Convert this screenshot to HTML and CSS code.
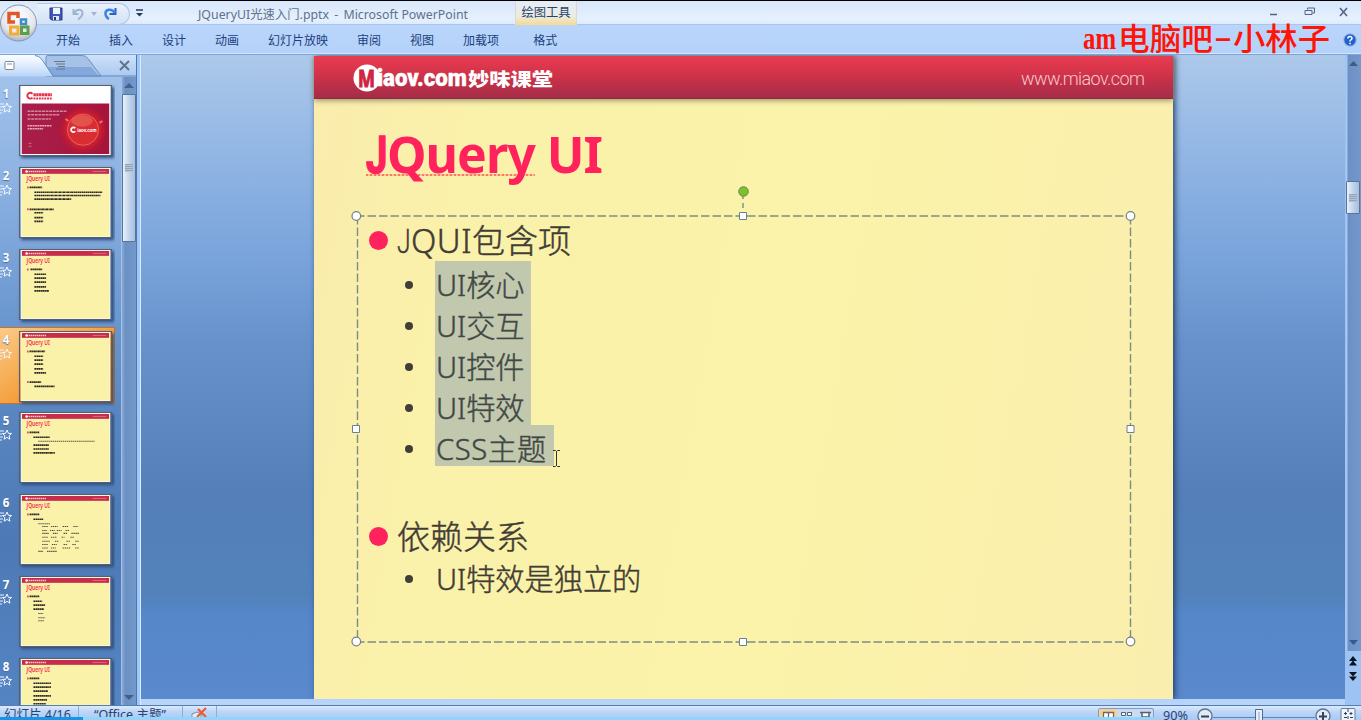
FILE: index.html
```html
<!DOCTYPE html>
<html lang="zh-CN">
<head>
<meta charset="utf-8">
<title>JQueryUI光速入门.pptx - Microsoft PowerPoint</title>
<link rel="stylesheet" href="styles.css">
</head>
<body>
<svg class="defs" width="0" height="0">
  <defs>
    <linearGradient id="cover" x1="0" y1="0" x2="1" y2="0"><stop offset="0" stop-color="#a91f4b"/><stop offset="1" stop-color="#a5143a"/></linearGradient>
    <radialGradient id="globe"><stop offset="0" stop-color="#ff8a70"/><stop offset=".45" stop-color="#e53a3c"/><stop offset=".8" stop-color="#c6182f"/><stop offset="1" stop-color="#b0163a" stop-opacity="0"/></radialGradient>
    <radialGradient id="orb" cx=".5" cy=".3" r=".7"><stop offset="0" stop-color="#fff"/><stop offset=".7" stop-color="#e3e5ea"/><stop offset="1" stop-color="#aab2c2"/></radialGradient>
    <symbol id="base" viewBox="0 0 92 71">
      <rect width="92" height="71" fill="#fbf2aa"/>
      <rect x="1" y="1" width="90" height="5" fill="#c62c4b"/>
      <circle cx="6" cy="3.5" r="1.3" fill="#fff"/>
      <path d="M8 3.6h18" stroke="#f6c5c9" stroke-width="1.3" stroke-dasharray="1.6 .5"/>
      <path d="M74 3.5h14" stroke="#dc8091" stroke-width=".8"/>
      <text x="6" y="13.500" class="mini-title" textLength="24" lengthAdjust="spacingAndGlyphs">JQuery UI</text>
      <path d="M6.500 20h1.500" stroke="#ef3350" stroke-width="2"/>
      <rect x=".5" y=".5" width="91" height="70" fill="none" stroke="#f8f5e4"/>
    </symbol>
    <symbol id="star" viewBox="0 0 12 12"><path d="M0 2h4M0 5h2M0 8h3M0 11h2" stroke="#e9f2ff"/><path d="M7 1l1.400 3.300 3.200.2-2.500 2.200.8 3.500L7 8.400 4.100 10.200l.8-3.500L2.400 4.500l3.200-.2z" fill="none" stroke="#f5f9ff"/></symbol>
  </defs>
</svg>
<div class="app">
  <header class="titlebar">
    <div class="qat">
      <svg width="14" height="14" viewBox="0 0 14 14"><path d="M1 1h12v12H2.500L1 11.500z" fill="#4457b4" stroke="#25368d"/><path d="M4 1h7v6H4z" fill="#eef5ff"/><path d="M4 9h6v4H4z" fill="#dfe7f8"/><path d="M5 10h2v3H5z" fill="#26367f"/></svg>
      <svg class="undo" width="12" height="14" viewBox="0 0 12 14"><path d="M1.500 2v5h5" fill="none" stroke="#9db3d2" stroke-width="2"/><path d="M2 6.500C5 1 11 2 10.500 6.500 10.300 9.500 8 11 6 12.500" fill="none" stroke="#9db3d2" stroke-width="2"/></svg>
      <svg class="drop" width="6" height="4"><path d="M0 0h6L3 4z" fill="#a5b5cf"/></svg>
      <svg class="redo" width="13" height="14" viewBox="0 0 13 14"><path d="M11.500 1v6h-6" fill="none" stroke="#2c61c4" stroke-width="2"/><path d="M11 6C8 1 1 2 1.500 7c.2 2.500 1.500 4 3.500 5" fill="none" stroke="#3f83e0" stroke-width="2.500"/></svg>
    </div>
    <svg class="more" width="7" height="8"><path d="M0 1h7" stroke="#26395e" stroke-width="1.500"/><path d="M0 4h7L3.500 7.500z" fill="#26395e"/></svg>
    <span class="doc">JQueryUI光速入门.pptx<i> - </i>Microsoft PowerPoint</span>
    <span class="context">绘图工具</span>
    <svg class="winctl" width="80" height="14" viewBox="0 0 80 14"><path d="M1 9.500h7" stroke="#526583" stroke-width="1.500"/><path d="M38.500 4.500V3h7v5h-2M36 5.500h7v4h-7z" fill="none" stroke="#526583"/><path d="M71 3l7 8M78 3l-7 8" stroke="#526583" stroke-width="1.600"/></svg>
  </header>
  <nav class="ribbon">
    <span>开始</span><span>插入</span><span>设计</span><span>动画</span><span>幻灯片放映</span><span>审阅</span><span>视图</span><span>加载项</span><span class="format">格式</span>
    <svg class="help" width="14" height="14" viewBox="0 0 14 14"><circle cx="7" cy="7" r="6.200" fill="#2361d0" stroke="#9db8dc"/><path d="M4.800 5.500C5 2.800 9.300 3 9 5.400 8.800 6.800 7 6.800 7 8.500M7 9.700v1.500" fill="none" stroke="#fff" stroke-width="1.500"/></svg>
  </nav>
  <main class="work">
    <aside class="panel">
      <svg class="tabs" width="136" height="22" viewBox="0 0 136 22">
        <defs><linearGradient id="tabg" x1="0" y1="0" x2="0" y2="1"><stop offset="0" stop-color="#fdfeff"/><stop offset=".55" stop-color="#dbeaff"/><stop offset="1" stop-color="#b9d5f9"/></linearGradient>
        <linearGradient id="tabh" x1="0" y1="0" x2="0" y2="1"><stop offset="0" stop-color="#cfe1f8"/><stop offset="1" stop-color="#a9c8f0"/></linearGradient></defs>
        <path d="M0 0h136v22H0z" fill="url(#tabh)"/>
        <path d="M46 21V2q0-1.500 2-1.500h34q4 0 6 3L101 21z" fill="#a6c2e6" stroke="#6e93c4"/>
        <path d="M47 12h44l8 9H47z" fill="#83a9dc"/>
        <path d="M0 0h35q4 0 7 4l11 17H0z" fill="url(#tabg)"/>
        <path d="M35 .5q4 0 7 4L53 21h83" fill="none" stroke="#5f86b8"/>
        <rect x="5" y="6.500" width="9" height="8" rx="1" fill="#fff" stroke="#7e8792"/><path d="M7 9h5" stroke="#8a8f98"/>
        <path d="M54 6.500h11M56 9h9M58 11.500h7M56 14h9" stroke="#6d7785"/>
        <path d="M120 6l9 9M129 6l-9 9" stroke="#5d7390" stroke-width="1.900"/>
      </svg>
      <div class="panel-body">
        <ol class="thumbs">
          <li><div class="num">1<svg><use href="#star"/></svg></div>
            <svg class="thumb" viewBox="0 0 92 71"><rect width="92" height="71" fill="#fff"/><path d="M1 18h90v52H1z" fill="url(#cover)"/><circle cx="64" cy="45" r="26" fill="url(#globe)" opacity=".7"/><circle cx="64" cy="45" r="16" fill="#d92d34"/><ellipse cx="63" cy="36" rx="11" ry="6" fill="#f58a70" opacity=".4"/><circle cx="64" cy="45" r="16" fill="none" stroke="#f4614e"/><path d="M46 34l3 2M84 36l-3 2" stroke="#ff7057" stroke-width="2"/>
              <path d="M12 8a3 3 0 1 0 0 4" fill="none" stroke="#e7304b" stroke-width="2"/><path d="M13 9h19" stroke="#e7304b" stroke-width="3" stroke-dasharray="2.500 .4"/><path d="M13 12.800h19" stroke="#e7304b" stroke-width="2" stroke-dasharray="2 .8"/>
              <path d="M7 26h40M7 29.500h33M7 34h24" stroke="#d386a0" stroke-width="1.500" stroke-dasharray="3 .7"/><path d="M7 41h25M7 44h16" stroke="#e0aebf" stroke-width="1.500" stroke-dasharray="2 .5"/><path d="M8 59h3M8 62h3" stroke="#cc6e8a"/>
              <path d="M56 43.500a2.400 2.400 0 1 0 0 3" fill="none" stroke="#fff" stroke-width="1.800"/><text x="58" y="47.500" class="mini-logo" textLength="20" lengthAdjust="spacingAndGlyphs">iaov.com</text></svg></li>
          <li><div class="num">2<svg><use href="#star"/></svg></div>
            <svg class="thumb" viewBox="0 0 92 71"><use href="#base"/><g class="ink"><path d="M9 20h13M14 25h70M14 28.300h68M14 32h38M9 42.500h25M14 46h9M14 51h9M14 55h9"/></g><path d="M6.500 42.500h1.500" stroke="#ef3350" stroke-width="2"/></svg></li>
          <li><div class="num">3<svg><use href="#star"/></svg></div>
            <svg class="thumb" viewBox="0 0 92 71"><use href="#base"/><g class="ink"><path d="M10 20h12M14 25h12M14 29h12M14 33h12M14 38h12M14 42h15"/></g></svg></li>
          <li class="current"><div class="num">4<svg><use href="#star"/></svg></div>
            <svg class="thumb" viewBox="0 0 92 71"><use href="#base"/><g class="ink"><path d="M9 20h16M14 25h9M14 29h9M14 33h9M14 38h9M14 42h12M9 51.500h12M14 56h21"/></g><path d="M6.500 51.500h1.500" stroke="#ef3350" stroke-width="2"/></svg></li>
          <li><div class="num">5<svg><use href="#star"/></svg></div>
            <svg class="thumb" viewBox="0 0 92 71"><use href="#base"/><g class="ink"><path d="M9 20h10M13 25h17M13 33h16M13 37h16M13 41h22"/></g><path d="M18 29h58" class="faint"/></svg></li>
          <li><div class="num">6<svg><use href="#star"/></svg></div>
            <svg class="thumb" viewBox="0 0 92 71"><use href="#base"/><g class="ink"><path d="M9 20h10M13 25h10"/></g><path d="M18 29.500h12M22 32.500h6M31 32.500h7M43 32.500h6M54 32.500h5M22 36.500h5M30 36.500h5M37 36.500h5M46 36.500h4M22 39.500h7M33 39.500h5M44 39.500h4M52 39.500h8M22 43.500h6M31 43.500h6M42 43.500h3M51 43.500h4M22 47.500h8M35 47.500h4M47 47.500h4M56 47.500h4M22 51h6M32 51h5M44 51h4M53 51h4M22 54.500h6M31 54.500h5M43 54.500h8M56 54.500h4M18 58h5M27 58h10" class="faint"/></svg></li>
          <li><div class="num">7<svg><use href="#star"/></svg></div>
            <svg class="thumb" viewBox="0 0 92 71"><use href="#base"/><g class="ink"><path d="M9 20h10M13 25h9M13 29h12M13 33h11"/></g><path d="M18 37.500h5M18 42h7M18 45h6" class="faint"/></svg></li>
          <li><div class="num">8<svg><use href="#star"/></svg></div>
            <svg class="thumb" viewBox="0 0 92 71"><use href="#base"/><g class="ink"><path d="M9 20h10M13 25h18M13 29h18M13 33h15M13 38h18M13 42h14M13 46h13"/></g></svg></li>
        </ol>
        <div class="vbar"><svg width="11" height="5"><path d="M0 5h10L5 0z" fill="#456389"/></svg><div class="knob"><b></b></div><svg class="end" width="11" height="5"><path d="M0 0h10L5 5z" fill="#3d5f91"/></svg></div>
      </div>
    </aside>
    <div class="split"></div>
    <section class="canvas">
      <article class="slide">
        <div class="brand">
          <svg width="859" height="42" viewBox="0 0 859 42">
            <circle cx="53" cy="22" r="13.500" fill="#fff"/>
            <text x="44" y="30.500" class="logo-m" textLength="17" lengthAdjust="spacingAndGlyphs">M</text>
            <text x="63" y="30" class="logo" textLength="90" lengthAdjust="spacingAndGlyphs">iaov.com</text>
            <text x="154" y="30" class="logo-cn" textLength="85" lengthAdjust="spacingAndGlyphs">妙味课堂</text>
            <text x="707" y="28.500" class="url" textLength="124" lengthAdjust="spacing">www.miaov.com</text>
          </svg>
        </div>
        <h1><span class="typo"><span class="jay">J</span>Query</span> UI</h1>
        <div class="holder">
          <svg class="frame" width="790" height="466" viewBox="0 0 790 466">
            <path d="M8 31H782.500M8 457H782.500M9.500 31V457M782.500 31V457" fill="none" stroke="#7d8d84" stroke-width="1.400" stroke-dasharray="8.500 3"/>
            <path d="M395 9v22" stroke="#7d8d84" stroke-width="1.400" stroke-dasharray="5 4"/>
            <circle cx="395.500" cy="6.500" r="4.800" fill="#7cc02c" stroke="#6a8a55"/>
            <g fill="#fff" stroke="#77808c" stroke-width="1.200"><circle cx="8.300" cy="31" r="4.300"/><circle cx="782.500" cy="31" r="4.300"/><circle cx="8.300" cy="456.500" r="4.300"/><circle cx="782.500" cy="456.500" r="4.300"/></g>
            <g fill="#fff" stroke="#668098"><path d="M391.500 27.500h7v7h-7zM391.500 453.500h7v7h-7zM4.500 240.500h7v7h-7zM779 240.500h7v7h-7z"/></g>
          </svg>
          <ul class="outline">
            <li class="top"><span class="wide"><span class="jay">J</span>QUI</span>包含项</li>
            <li class="sub"><mark>UI核心</mark></li>
            <li class="sub"><mark>UI交互</mark></li>
            <li class="sub"><mark>UI控件</mark></li>
            <li class="sub"><mark>UI特效</mark></li>
            <li class="sub"><mark class="last"><span class="css">CSS</span>主题</mark>
              <svg class="caret" width="7" height="17"><path d="M0 .5h2.500l1 1 1-1H7M3.500 1v15M0 16.500h2.500l1-1 1 1H7" fill="none" stroke="#333"/></svg></li>
            <li class="top second">依赖关系</li>
            <li class="sub final"><span class="plain">UI特效是独立的</span></li>
          </ul>
        </div>
      </article>
    </section>
    <div class="rail">
      <div class="track"><svg width="9" height="5"><path d="M0 5h9L4.500 0z" fill="#405a80"/></svg><div class="knob"><b></b></div><svg class="end" width="9" height="5"><path d="M0 0h9L4.500 5z" fill="#315a96"/></svg></div>
      <svg class="jump" width="9" height="26"><path d="M0 5h8L4 0zM0 9.500h8L4 4.500zM0 16h8L4 20.500zM0 20.500h8L4 25z" fill="#0b1220"/></svg>
    </div>
  </main>
  <footer class="status">
    <span class="page">幻灯片 4/16</span><span class="theme">“Office 主题”</span>
    <span class="spell"><svg width="18" height="12" viewBox="0 0 18 12"><path d="M1 8l5-2 4 2v4H1z" fill="#e9eef5" stroke="#7c8ba5"/><path d="M7 3l8 8M15 2L6 11" stroke="#ee5a2c" stroke-width="2.200"/></svg></span>
    <span class="tools">
      <svg width="263" height="15" viewBox="0 0 263 15"><rect x=".5" y="2.500" width="55" height="16" rx="1.500" fill="#c8dcf5" stroke="#7f9cc4"/><path d="M1 3h18v12H1z" fill="#f6cf94"/><path d="M5.500 6.500h10V15h-10zM10.500 7v8" fill="#fff" stroke="#6d6a62" stroke-width="1.300"/><path d="M23.500 6.500h4v3h-4zM29.500 6.500h4v3h-4z" fill="#f6f9fe" stroke="#59606e"/><path d="M42 6.500h11M44 7v4h7V7" fill="#f6f9fe" stroke="#59606e" stroke-width="1.500"/>
      <text x="65" y="14" class="pct" textLength="25" lengthAdjust="spacingAndGlyphs">90%</text>
      <path d="M115 11.500h102" stroke="#6782aa"/><g fill="#e1ebf8" stroke="#5d7190" stroke-width="1.300"><circle cx="107" cy="10" r="7"/><circle cx="225" cy="10" r="7"/></g><path d="M103 10.500h8M221 10.500h8M225 6v8" stroke="#34435e" stroke-width="2"/><path d="M157.500 3.500h7V15h-7z" fill="#e6effb" stroke="#506c96"/><path d="M161 6v8" stroke="#8aa3c8"/><rect x="243" y="2.500" width="14" height="13" rx="1" fill="#eef4fb" stroke="#6b7f9e"/><path d="M246 7.500h3M247.500 6v3M251.500 7.500h3M253 6v3M250 3v3M246 11.500h3M252 11.500h3M250 10v3" fill="none" stroke="#344258"/></svg>
    </span>
  </footer>
  <div class="progress"></div>
  <svg class="office" width="40" height="42" viewBox="0 0 40 42"><circle cx="18.500" cy="22" r="18" fill="url(#orb)" stroke="#8796ae"/><g fill="none"><path d="M15 21H9v-8.500h9V17" stroke="#e0582a" stroke-width="3.500"/><path d="M21 18.500h5V23h-5z" stroke="#3f8bd0" stroke-width="2.500"/><path d="M10.500 26H18v7h-7.500z" stroke="#f3ac37" stroke-width="3"/><path d="M21.500 26H28v6.500h-6.500z" stroke="#5ba048" stroke-width="3"/></g></svg>
  <svg class="watermark" width="252" height="38" viewBox="0 0 252 38"><text x="2" y="29" class="wm-lat" textLength="33" lengthAdjust="spacingAndGlyphs">am</text><text x="37" y="30" class="wm-cn" textLength="95" lengthAdjust="spacingAndGlyphs">电脑吧</text><text x="133" y="27" class="wm-lat" textLength="18" lengthAdjust="spacingAndGlyphs">-</text><text x="152" y="30" class="wm-cn" textLength="97" lengthAdjust="spacingAndGlyphs">小林子</text></svg>
</div>
</body>
</html>
```
FILE: styles.css
```css
* { box-sizing: border-box; }
body { margin: 0; background: #b8d4f8; font-family: "Noto Sans", "Noto Sans CJK SC", sans-serif; overflow: hidden; }
svg { display: block; flex: none; }
.defs { position: absolute; }
.app { position: relative; width: 1361px; height: 720px; display: flex; flex-direction: column; border-top: 1px solid #000; overflow: hidden; }

.titlebar { height: 24px; flex: none; display: flex; align-items: flex-start; background: linear-gradient(#d9e7fb, #deebfc 40%, #e6f1fe 75%, #dcebfd); border-bottom: 1px solid #a9c5ea; white-space: nowrap; }
.qat { width: 93px; height: 22px; margin: 2px 0 0 37px; padding: 3px 0 0 12px; display: flex; background: linear-gradient(#e9f1fc, #d3e2f6); border: 1px solid #b0c7e6; border-left: 0; border-radius: 0 11px 11px 0; }
.undo { margin-left: 9px; }
.drop { margin: 5px 0 0 7px; }
.redo { margin-left: 7px; }
.more { margin: 8px 0 0 6px; }
.doc { width: 270px; margin: 5px 0 0 55px; font-size: 12.350px; line-height: 18px; color: #61718c; }
.doc i { font-style: normal; white-space: pre; padding: 0 2px; }
.context { width: 62px; height: 24px; margin-left: 47px; padding-top: 3px; text-align: center; font-size: 12.300px; line-height: 18px; color: #27446f; background: linear-gradient(#e5edf7, #ecebdf 65%, #f5d98e); border: solid #dcd9cf; border-width: 0 1px; }
.winctl { margin: 4px 0 0 692px; }

.ribbon { height: 30px; flex: none; display: flex; gap: 29px; padding: 7px 0 0 56px; background: linear-gradient(#bad5fb, #b4d2fa); border-bottom: 1px solid #7fa3d2; box-shadow: inset 0 -1px #d2e5ff; font-size: 12px; line-height: 18px; color: #1c3f7c; white-space: nowrap; }
.ribbon .format { margin-left: 5px; }
.ribbon .help { margin: 1px 4px 0 auto; }

.work { height: 650px; flex: none; display: grid; grid-template-columns: 136px 5px 1fr 16px; }
.panel { height: 650px; overflow: hidden; background: linear-gradient(#a5c5ed, #8cb1e1 20%, #6e9ad2 38%, #5885c0 56%, #4d7ab6 75%, #5584c3); }
.panel-body { display: flex; height: 628px; justify-content: space-between; }
.thumbs { list-style: none; margin: 0; padding: 4px 0 0; width: 115px; height: 628px; overflow: hidden; }
.thumbs li { display: flex; height: 77px; margin-bottom: 4.850px; padding-top: 4px; }
.thumbs .current { background: linear-gradient(145deg, #fcca86, #f39a35 60%, #ed8d27); border: solid #c8732b; border-width: 1px 1px 1px 0; padding-top: 3px; }
.num { width: 12px; margin-right: 7px; text-align: center; font-weight: bold; font-size: 11.500px; line-height: 14px; padding-top: 2px; color: #fff; text-shadow: 0 1px 1px #4c6c98; }
.num svg { width: 12px; height: 12px; margin-top: 1px; }
.thumb { width: 93px; height: 71px; border: 1px solid #59606c; box-shadow: 2px 2px 3px #31507c; }
.mini-title { font: 600 6.800px "Noto Sans", sans-serif; fill: #f5254f; }
.mini-logo { font: bold 6px "Noto Sans", sans-serif; fill: #fff; }
.ink path { stroke: #2b2822; stroke-width: 1.700; stroke-dasharray: 2.200 .4 1.300 .3; fill: none; }
.faint { stroke: #575343; stroke-width: 1.100; stroke-dasharray: 1.500 .6; fill: none; }
.vbar { width: 15px; height: 628px; padding-top: 6px; display: flex; flex-direction: column; align-items: center; background: linear-gradient(90deg, #89a9d3, #6b90c3 25%, #7398ca); border-left: 1px solid #a2c0e8; }
.knob { width: 14px; display: flex; align-items: center; justify-content: center; background: linear-gradient(90deg, #e8f1fc, #c3d5ec 50%, #a5bddd); border: 1px solid #5a7398; border-radius: 1px; }
.vbar .knob { height: 148px; margin-top: 6px; }
.knob b { width: 8px; height: 8px; background: repeating-linear-gradient(#94a3b8 0 1px, #b6c3d5 1px 2px); }
.vbar .end { margin: auto 0 5px; }
.split { background: linear-gradient(90deg, #4d78b6 1px, #a1c7f7 1px 4px, #dcecff 4px); }

.canvas { height: 646px; padding: 1px 0 0 173px; background: linear-gradient(#adc9ea, #99bbe6 11%, #7ba5dc 30%, #6791cb 45%, #547fb8 68%, #5382bb 84%, #5587c9 87%, #5a89cd); border-bottom: 2px solid #b2d3fb; overflow: hidden; }
.slide { width: 859px; height: 643px; background: linear-gradient(100deg, #faecad, #faf1aa 18%, #fbf3a9 55%, #faeeae); box-shadow: 2px 0 6px #23416d; }
.brand { height: 43px; background: linear-gradient(#e83c50, #d03249 45%, #a52c48); border-bottom: 1px solid #8e2c42; box-shadow: 0 2px 5px #a29b70; }
.logo-m { font: bold 23px "Noto Sans", sans-serif; fill: #cf2541; stroke: #cf2541; stroke-width: 1; }
.logo { font: 900 24px Roboto, sans-serif; fill: #fff; stroke: #fff; stroke-width: .4; }
.logo-cn { font: 900 18px "Noto Sans CJK SC", sans-serif; fill: #fff; }
.url { font: 300 18px Roboto, sans-serif; fill: #f5c9cd; }
h1 { margin: 20px 0 0 52px; height: 71px; font-size: 50px; line-height: 71px; letter-spacing: -1px; color: #ff225d; white-space: nowrap; }
.jay { font-family: Roboto, sans-serif; display: inline-block; transform: scaleX(.75); transform-origin: 0 50%; }
h1 .jay { width: 21px; font-size: 51px; line-height: 50px; -webkit-text-stroke: 1.500px; }
.wide .jay { width: 14px; line-height: 33px; }
.typo { background: repeating-linear-gradient(90deg, #f8786a 0 2px, #fac78e 2px 4px) 0 54px / 171px 2px no-repeat; }
.holder { position: relative; margin: 26px 0 0 42px; width: 775px; height: 427px; }
.frame { position: absolute; left: -8px; top: -31px; }
.outline { position: relative; list-style: none; margin: 0; padding: 5px 0 0; color: #413c35; font-weight: 300; -webkit-text-stroke: .45px; white-space: nowrap; }
.top { display: flex; align-items: center; height: 40px; font-size: 33px; line-height: 40px; }
.top::before { content: ""; width: 19px; height: 19px; margin: -2px 9px 0 13px; border-radius: 50%; background: #ff225d; }
.wide { width: 75px; letter-spacing: .5px; }
.sub { display: flex; align-items: center; height: 41px; font-size: 29.200px; line-height: 40px; }
.sub::before { content: ""; width: 8px; height: 8px; margin: 6px 22px 0 49px; border-radius: 50%; background: #403e38; }
.sub mark { display: block; width: 96px; height: 41px; padding: 4px 0 0 1px; color: #404945; background: #c2c8ae; }
.sub .last { width: 119px; }
.css { letter-spacing: .6px; }
.plain { padding-left: 1px; }
.caret { margin: 26px 0 0 -1px; }
.second { margin-top: 51px; }
.final { margin-top: 1px; }
.final::before { margin-top: 0; }

.rail { display: flex; flex-direction: column; align-items: center; background: #9cc3f4; }
.track { width: 15px; height: 596px; padding-top: 6px; display: flex; flex-direction: column; align-items: center; background: linear-gradient(90deg, #a9c7ef 1px, #6b90c5 2px, #7598cb); }
.track .knob { height: 33px; margin-top: 115px; }
.track .end { margin: auto 0 6px; }
.jump { margin-top: 5px; }

.status { height: 15px; flex: none; display: flex; overflow: hidden; background: linear-gradient(#dceafe, #bdd6f8 40%, #a8c9f4); border-top: 1px solid #567db1; font-size: 12.500px; line-height: 18px; color: #294471; white-space: nowrap; }
.page { width: 79px; padding-left: 4px; border-right: 1px solid #8badda; }
.theme { width: 104px; padding-left: 15px; border-right: 1px solid #8badda; }
.spell { width: 34px; padding-left: 8px; border-right: 1px solid #8badda; }
.tools { margin-left: auto; }
.pct { font: 12px "Noto Sans", sans-serif; fill: #294471; }
.progress { position: absolute; left: 0; bottom: 0; width: 1154px; height: 3px; background: linear-gradient(90deg, #1795e9 83px, #91d5fc 83px); }
.office { position: absolute; left: 0; top: 0; }
.watermark { position: absolute; left: 1081px; top: 19px; }
.wm-lat { font: bold 31px "Liberation Serif", serif; fill: #ff1408; }
.wm-cn { font: 500 31px "Noto Sans CJK SC", sans-serif; fill: #ff1408; }
```
